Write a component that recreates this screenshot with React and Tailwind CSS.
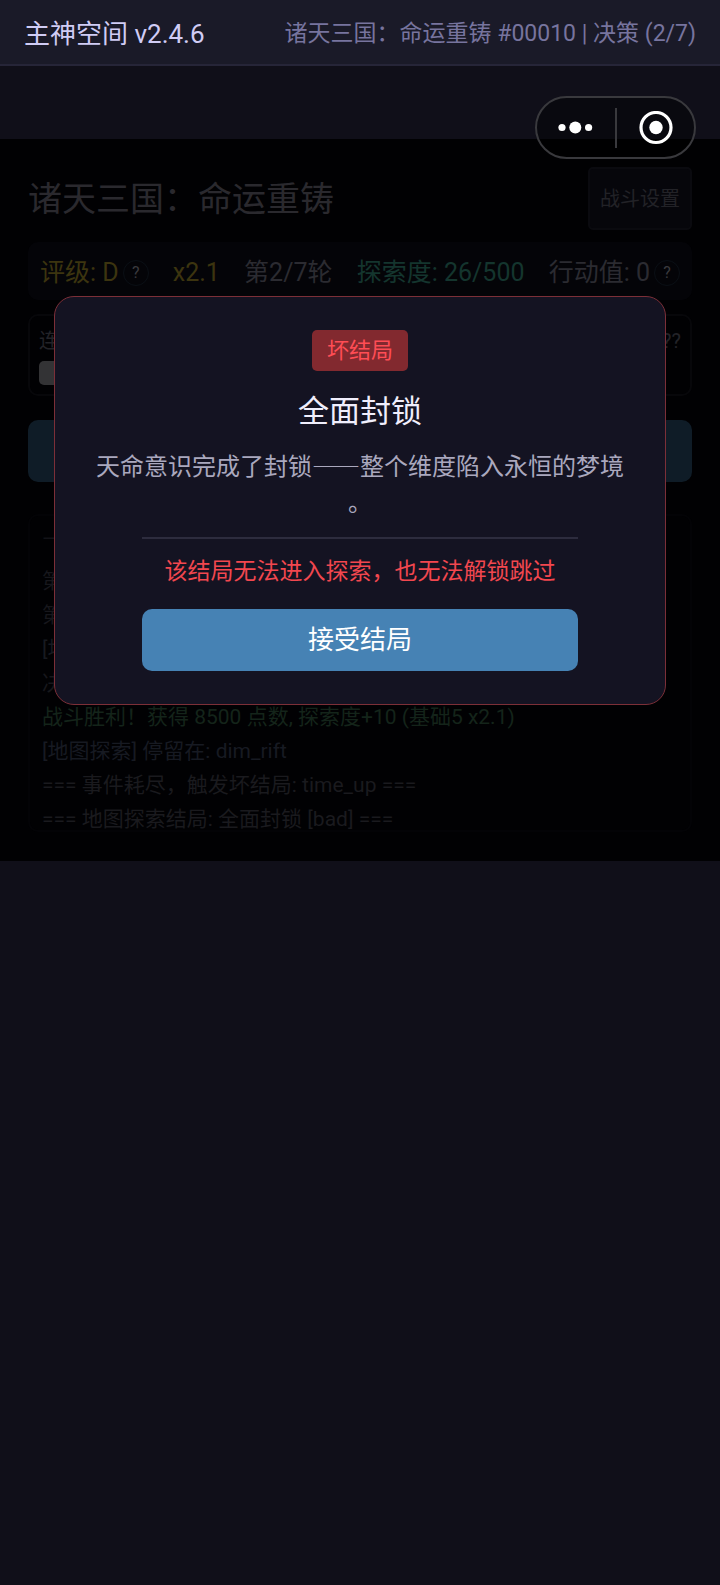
const logs = [
  { text: "第2", color: "text-[#17171c]" },
  { text: "第2", color: "text-[#17171c]" },
  { text: "[地", color: "text-[#171a20]" },
  { text: "决策", color: "text-[#17171c]" },
  { text: "战斗胜利！获得 8500 点数, 探索度+10 (基础5 x2.1)", color: "text-[#14241a]" },
  { text: "[地图探索] 停留在: dim_rift", color: "text-[#171a22]" },
  { text: "=== 事件耗尽，触发坏结局: time_up ===", color: "text-[#1a1a1e]" },
  { text: "=== 地图探索结局: 全面封锁 [bad] ===", color: "text-[#1a1a1e]" },
];

// Small round "?" button beside a stat
function HelpButton({ label }) {
  return (
    <button aria-label={label} className="ml-1 size-[26px] shrink-0 rounded-full border border-[#0a0f15] text-base leading-none text-[#3a3a3e]">
      ?
    </button>
  );
}

// Top bar with the app name and the current run
function TopBar() {
  return (
    <header className="flex h-[66px] items-center justify-between border-b-2 border-[#262538] bg-[#1a1a28] px-6 pt-1">
      <h1 className="text-[26px] text-[#d0ccf5]">主神空间 v2.4.6</h1>
      <p className="text-[23px] text-[#77749e]">诸天三国：命运重铸 #00010 | 决策 (2/7)</p>
    </header>
  );
}

// Floating capsule: menu and close
function Capsule() {
  return (
    <div className="absolute top-24 right-6 z-20 flex h-[63px] w-[161px] items-center rounded-full border-2 border-[#39393d] bg-black/40">
      <button aria-label="更多" className="flex h-full flex-1 items-center justify-center">
        <svg className="h-4 w-9" viewBox="0 0 36 16" fill="white">
          <circle cx="4" cy="7.5" r="3.6" />
          <circle cx="17.3" cy="7.5" r="6" />
          <circle cx="30.6" cy="7.5" r="3.6" />
        </svg>
      </button>
      <span className="h-10 w-[2px] bg-[#39393d]" />
      <button aria-label="关闭" className="flex h-full flex-1 items-center justify-center">
        <svg className="h-[34px] w-9" viewBox="0 0 36 34">
          <circle cx="19" cy="16.5" r="15" fill="none" stroke="white" strokeWidth="3.2" />
          <circle cx="19" cy="16.5" r="6.7" fill="white" />
        </svg>
      </button>
    </div>
  );
}

// Bad ending dialog shown over the dimmed page
function EndingDialog() {
  return (
    <div role="dialog" aria-labelledby="ending-title" className="absolute inset-0 z-10 flex items-center justify-center">
      <div className="flex w-[85%] flex-col items-center rounded-[20px] border border-[#7c2f38] bg-[#141322] px-[33px] py-[33px]">
        <span className="rounded-[5px] bg-[#82292f] px-[15px] text-[22px] leading-[41px] text-[#ff4d55]">坏结局</span>
        <h3 id="ending-title" className="mt-[18px] text-[31px] leading-[46px] text-[#f0eefc]">全面封锁</h3>
        <p lang="zh-CN" className="mt-3 text-center font-['Noto_Sans_CJK_SC',sans-serif] text-[24px] leading-[36px] text-[#aaa8be] [line-break:anywhere]">
          天命意识完成了封锁——整个维度陷入永恒的梦境。
        </p>
        <div className="mt-[18px] flex w-4/5 flex-col items-center border-t-2 border-[#2d2c3e] pt-4">
          <p className="text-[23px] leading-[34px] text-[#f2474f]">该结局无法进入探索，也无法解锁跳过</p>
          <button className="mt-5 h-[62px] w-full rounded-[10px] bg-[#4682b4] pt-[2px] text-[26px] text-white">接受结局</button>
        </div>
      </div>
    </div>
  );
}

export default function App() {
  return (
    <div className="relative min-h-screen bg-[#100f19] font-[Roboto,'Noto_Sans_CJK_SC',sans-serif] font-normal">
      <TopBar />
      <Capsule />
      <main className="relative mt-[73px] bg-[#010103] px-7 pt-7 pb-[29px]">
        <div className="flex items-center justify-between">
          <h2 className="pt-[2px] text-[34px] text-[#2a292e]">诸天三国：命运重铸</h2>
          <button className="h-[63px] rounded-[5px] border-2 border-[#0a0a0f] bg-[#06060b] px-[10px] text-[20px] text-[#222227]">战斗设置</button>
        </div>

        <div className="mt-3 flex h-[58px] items-center justify-between rounded-[10px] bg-[#040408] px-3 pt-1 text-[25px]">
          <span className="flex items-center text-[#3c340f]">评级: D<HelpButton label="评级说明" /></span>
          <span className="text-[#3c340f]">x2.1</span>
          <span className="text-[#2b2b31]">第2/7轮</span>
          <span className="text-[#14352e]">探索度: 26/500</span>
          <span className="flex items-center text-[#2b2b31]">行动值: 0<HelpButton label="行动值说明" /></span>
        </div>

        <div className="mt-[14px] h-[82px] rounded-[10px] border-2 border-[#07070a] px-[9px] pt-[10px]">
          <div className="flex justify-between text-[20px] leading-[30px] text-[#232328]">
            <span>连</span>
            <span>??</span>
          </div>
          <div className="mt-[5px] h-6 w-20 rounded-[5px] bg-[#333335]" />
        </div>

        <button aria-label="继续" className="mt-6 block h-[62px] w-full rounded-[10px] bg-[#0f1c27]" />

        <div className="mt-8 h-[318px] overflow-hidden rounded-[10px] border-2 border-[#030306] px-3 pt-[6px]">
          <ul className="text-[21px] leading-[34px]">
            <li className="mb-2 text-[#121217]">—</li>
            {logs.map((log, i) => (
              <li key={i} className={log.color}>{log.text}</li>
            ))}
          </ul>
        </div>

        <EndingDialog />
      </main>
    </div>
  );
}
